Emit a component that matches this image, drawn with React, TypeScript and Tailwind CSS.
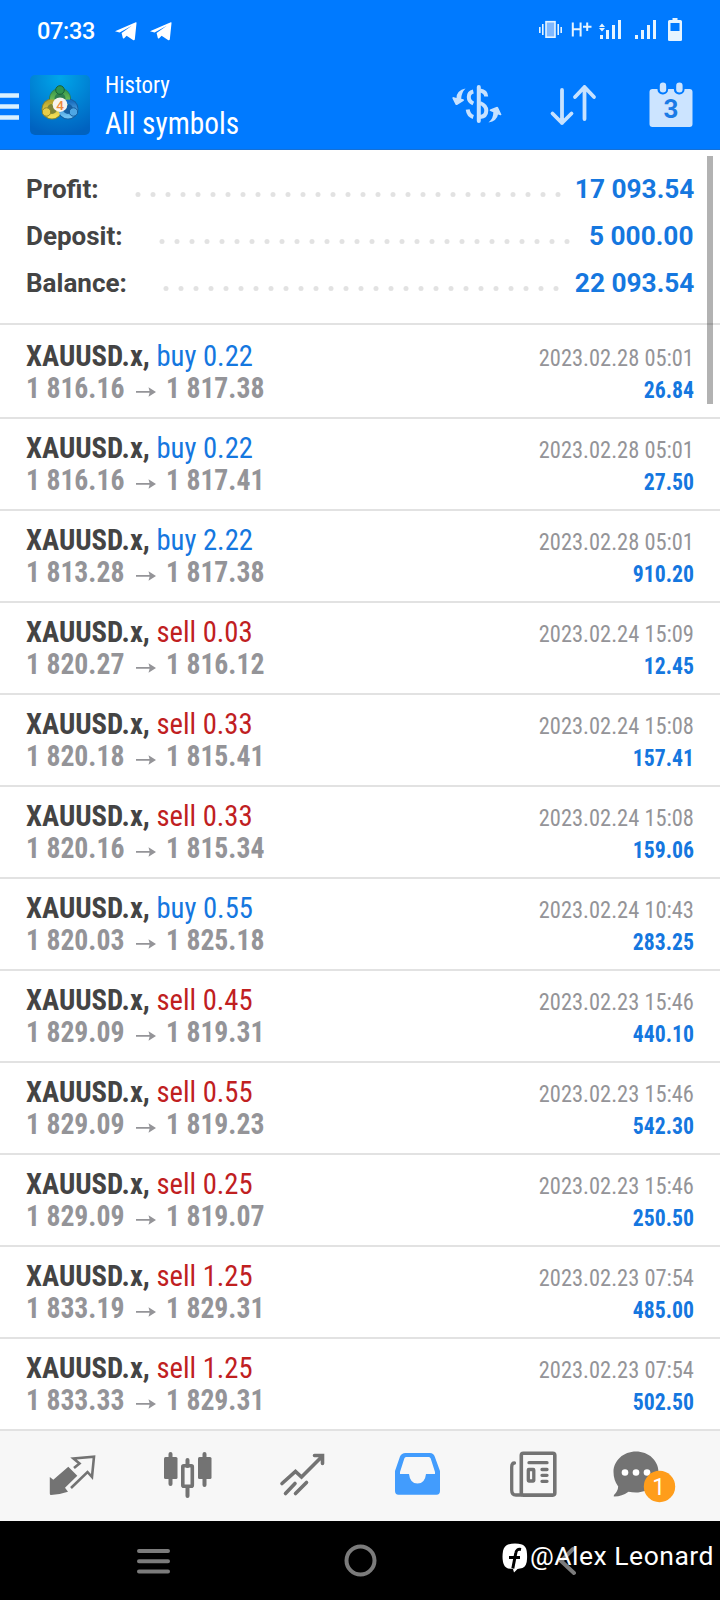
import React from "react";

type Side = "buy" | "sell";
type Deal = [Side, string, string, string, string, string];

const deals: Deal[] = [
  ["buy", "0.22", "1 816.16", "1 817.38", "2023.02.28 05:01", "26.84"],
  ["buy", "0.22", "1 816.16", "1 817.41", "2023.02.28 05:01", "27.50"],
  ["buy", "2.22", "1 813.28", "1 817.38", "2023.02.28 05:01", "910.20"],
  ["sell", "0.03", "1 820.27", "1 816.12", "2023.02.24 15:09", "12.45"],
  ["sell", "0.33", "1 820.18", "1 815.41", "2023.02.24 15:08", "157.41"],
  ["sell", "0.33", "1 820.16", "1 815.34", "2023.02.24 15:08", "159.06"],
  ["buy", "0.55", "1 820.03", "1 825.18", "2023.02.24 10:43", "283.25"],
  ["sell", "0.45", "1 829.09", "1 819.31", "2023.02.23 15:46", "440.10"],
  ["sell", "0.55", "1 829.09", "1 819.23", "2023.02.23 15:46", "542.30"],
  ["sell", "0.25", "1 829.09", "1 819.07", "2023.02.23 15:46", "250.50"],
  ["sell", "1.25", "1 833.19", "1 829.31", "2023.02.23 07:54", "485.00"],
  ["sell", "1.25", "1 833.33", "1 829.31", "2023.02.23 07:54", "502.50"],
];

function Telegram() {
  return (
    <svg width="22" height="19" viewBox="0 0 22 19" fill="#fff">
      <path d="M0 9.2 20.8.2Q21.8 0 21.500 1.200L19.800 17.600Q19.200 18.900 18 18L11.600 13.800 9.200 16.200Q8 17.100 7.700 15.500L6.600 11 16.800 3.800 4.600 10.600Z" />
    </svg>
  );
}

function StatusIcons() {
  return (
    <svg width="148" height="26" viewBox="0 0 148 26" fill="#e6f4ff">
      <rect x="9" y="3.700" width="9" height="15.500" fill="#7fb8ff" stroke="#e6f4ff" strokeWidth="1.600" />
      <path d="M2 9h1.600v6H2zM5 6h1.600v11H5zM20.400 6H22v11h-1.600zM23.400 9H25v6h-1.600z" />
      <path d="M35.800 4.500v14M43.600 4.500v14M35.800 11.300H43.600M46 8.700h8.500M50.200 4.500v8.500" fill="none" stroke="#e6f4ff" strokeWidth="2" />
      <path d="m62 9 3-3.500L68 9zM62 10l3 3.500L68 10zM63 17h3V21h-3zM69 12h3v9h-3zM75 7h3v14h-3zM81 2h3v19h-3z" />
      <path d="M98 17h3v4h-3zM104 12h3v9h-3zM110 7h3v14h-3zM116 2h3v19h-3z" />
      <path fillRule="evenodd" d="M135.500 0h5v2h3q1.500 0 1.500 1.500V22q0 1-1.500 1h-11q-1.500 0-1.500-1V3.500Q131 2 132.500 2h3zM133.500 5v8h9V5z" />
    </svg>
  );
}

function AppLogo() {
  return (
    <svg width="60" height="60" viewBox="0 0 60 60">
      <defs>
        <radialGradient id="bg" cx=".5" cy=".05" r=".95">
          <stop offset="0" stopColor="#00a6ea" />
          <stop offset="1" stopColor="#0062c0" />
        </radialGradient>
        <linearGradient id="gr" x2="0" y2="1"><stop stopColor="#3a9a4c" /><stop offset="1" stopColor="#8ed35c" /></linearGradient>
        <linearGradient id="ye" x2="0" y2="1"><stop stopColor="#b9a52e" /><stop offset="1" stopColor="#f3dd55" /></linearGradient>
        <linearGradient id="bl" x2="0" y2="1"><stop stopColor="#1a6fc0" /><stop offset="1" stopColor="#70c2f2" /></linearGradient>
      </defs>
      <rect width="60" height="60" rx="5" fill="url(#bg)" />
      <circle cx="30" cy="24" r="11" fill="#2d7f50" />
      <circle cx="22" cy="34" r="10.500" fill="#7d8538" />
      <circle cx="38" cy="34" r="10.500" fill="#1560a4" />
      <circle cx="30" cy="23.500" r="7.800" fill="none" stroke="url(#gr)" strokeWidth="4.500" />
      <circle cx="22" cy="34" r="7.300" fill="none" stroke="url(#ye)" strokeWidth="4.500" />
      <circle cx="38" cy="34" r="7.300" fill="none" stroke="url(#bl)" strokeWidth="4.500" />
      <circle cx="30" cy="15" r="4.300" fill="#2f9450" stroke="#17603b" />
      <circle cx="16.500" cy="37" r="4.200" fill="#e7cd49" stroke="#8d872b" />
      <circle cx="43.500" cy="37" r="4.200" fill="#4ea6e4" stroke="#135a9c" />
      <circle cx="30" cy="29.700" r="7.300" fill="#f8f3ee" />
      <text x="30" y="34.500" textAnchor="middle" fontSize="13.500" fontWeight="500" fill="#f08a3c" fontFamily="Roboto, sans-serif">4</text>
    </svg>
  );
}

function CurrencyIcon() {
  return (
    <svg width="50" height="42" viewBox="0 0 50 42" fill="none" stroke="#c7e2ff" strokeWidth="4">
      <path d="M26.800 4v34" strokeLinecap="round" />
      <path d="M28 7.500Q34 8.500 34.200 13.500M21.300 8.500Q16.800 9.500 16.800 14 16.800 18.500 21.300 20.500M15.700 26.500Q16.500 32.500 21.300 34M28 20Q34.300 22.500 34.300 27.500 34.300 33.500 28 34" />
      <path d="M13.500 5.500Q4.500 7.500 4.500 15L1 14Q0 14.500 .5 15.500L3.500 21.500Q4.300 22.500 5.500 21.700L11.800 17.700Q12.300 16.700 11.300 16.300L9.200 15.700Q9.500 9.500 13.500 5.500ZM36.500 39.500Q45 38 46 31.500L48.500 32.300Q49.800 32.500 49.300 31.300L46 24.300Q45.500 23.500 44.300 24L38 26.500Q37 27.300 38.300 28L41.300 29.200Q41.500 35.500 36.500 39.500Z" fill="#c7e2ff" stroke="none" />
    </svg>
  );
}

function SortIcon() {
  return (
    <svg width="48" height="42" viewBox="0 0 48 42" fill="none" stroke="#c7e2ff" strokeWidth="3.800" strokeLinecap="round" strokeLinejoin="round">
      <path d="M13 6v33M3.500 29.500 13 39l9.500-9.500M35.500 35V3M26 13l9.500-10L45 13" />
    </svg>
  );
}

function CalendarIcon() {
  return (
    <svg width="44" height="46" viewBox="0 0 44 46">
      <rect x=".5" y="7" width="43" height="38" rx="3" fill="#cce4ff" />
      <rect x="8.500" y="0" width="10.600" height="12.500" rx="5" fill="#007aff" />
      <rect x="24.900" y="0" width="10.600" height="12.500" rx="5" fill="#007aff" />
      <rect x="10.800" y=".5" width="6.400" height="10" rx="3.200" fill="#cce4ff" />
      <rect x="27.200" y=".5" width="6.400" height="10" rx="3.200" fill="#cce4ff" />
      <text x="22" y="36.300" textAnchor="middle" fontSize="26" fontWeight="700" fill="#1a7be6" fontFamily="Roboto, sans-serif">3</text>
    </svg>
  );
}

function Summary({ label, value, dots, end }: { label: string; value: string; dots: number; end: string }) {
  return (
    <div className="flex h-[47px] items-center justify-between text-[26px] leading-[47px]">
      <span className="font-bold text-[#444]">{label}</span>
      <span className="flex items-center">
        <svg width={dots * 15} height="6" className={"mt-[8px] " + end}>
          {Array.from({ length: dots }, (_, i) => (
            <circle key={i} cx={i * 15 + 12} cy="3.500" r="2.500" fill="#e2e2e2" />
          ))}
        </svg>
        <span className="origin-right scale-x-[1.01] font-bold text-[#1577df]">{value}</span>
      </span>
    </div>
  );
}

function DealRow({ deal }: { deal: Deal }) {
  const [side, volume, open, close, time, profit] = deal;
  return (
    <div className="flex h-[92px] justify-between border-b-2 border-[#e2e2e2] px-[26px] pt-[13px] font-['Roboto_Condensed',Roboto,sans-serif]">
      <div className="whitespace-nowrap">
        <div className="h-8 origin-left scale-x-[.955] text-[30px] leading-8">
          <span className="font-bold text-[#444]">XAUUSD.x, </span>
          <span className={side === "buy" ? "text-[#1577df]" : "text-[#c0201f]"}>{side} {volume}</span>
        </div>
        <div className="flex h-8 items-center text-[29px] font-bold leading-8 text-[#949498]">
          <span className="w-[110px] origin-left scale-x-[.955]">{open}</span>
          <svg width="20" height="12" viewBox="0 0 20 12" className="mt-2 shrink-0" fill="#949498">
            <path d="M0 5h14V6.800H0zM12.500 1.300 20 6l-7.500 4.700 1.300-4.700z" />
          </svg>
          <span className="ml-[10px] origin-left scale-x-[.955]">{close}</span>
        </div>
      </div>
      <div className="whitespace-nowrap pt-[2px] text-right text-2xl leading-8">
        <div className="h-8 origin-right scale-x-[.935] text-[#949498]">{time}</div>
        <div className="h-8 origin-right scale-x-[.905] font-bold text-[#1577df]">{profit}</div>
      </div>
    </div>
  );
}

function TabBar() {
  return (
    <nav className="flex h-[90px] shrink-0 bg-[#f7f7f7]">
      <svg width="720" height="90" viewBox="0 0 720 90" fill="none" stroke="#737373">
        <path d="M49.800 46 53.300 48.800 68.300 35.700 77.300 44.800 65 56.700 68 60.700Q60 63.500 51 64Q49.800 64 49.800 62.500Z" fill="#737373" stroke="none" />
        <path d="M74 37 79.500 32.500 73.500 27.500 94 25.700 92 46 87.500 41 71 57" strokeWidth="2.600" />
        <path d="M170.500 23v30M204.500 23v31M187.500 29v6M187.500 56v9" strokeWidth="4" strokeLinecap="round" />
        <rect x="164" y="26" width="13.500" height="22" rx="1.500" fill="#737373" stroke="none" />
        <rect x="198" y="26" width="13.500" height="22" rx="1.500" fill="#737373" stroke="none" />
        <rect x="182.800" y="34.800" width="9.500" height="20.500" strokeWidth="3.600" rx="1" />
        <path d="M282 52.500 295.500 40.500 301.500 46 321 26.500M314.500 24.500h8v8M285.500 62.500l9.500-10M295.500 62.500l11-11" strokeWidth="3.600" strokeLinecap="round" strokeLinejoin="miter" />
        <path fill="#429cfd" stroke="none" fillRule="evenodd" d="M405.500 22h24.500q3.500 0 4.700 3.500L440 40V60q0 3.700-3.500 3.700h-38Q395 63.700 395 60V40l5-14.500Q401.500 22 405.500 22ZM406 26q-1.200 0-1.700 1.500L400 41v2h9q1 9.500 8.500 9.500T426 43h9v-2l-4.300-13.500Q430 26 429 26Z" />
        <rect x="521.300" y="22.300" width="33.500" height="41.800" rx="2" strokeWidth="3.600" />
        <path d="M514.500 32q-2.800 0-2.800 4V59q0 5 4.200 5h6M529 31.700h18M542 38.500h5M542 44.300h5M542 50.300h5" strokeWidth="3.300" strokeLinecap="round" />
        <rect x="528.300" y="38.500" width="5.500" height="11.500" strokeWidth="3.300" rx=".5" />
        <path d="M636 20.500c12.500 0 22.500 9 22.500 20.500S648.500 61.500 636 61.500q-4 0-7.500-.8Q622 65.500 614.500 65.500q-1.500 0-.5-1.500 4-4 4.200-8.500Q613.500 49 613.500 41C613.500 29.500 623.500 20.500 636 20.500Z" fill="#737373" stroke="none" />
        <g fill="#fff" stroke="none"><circle cx="625" cy="41.500" r="3.300" /><circle cx="636" cy="41.500" r="3.300" /><circle cx="647" cy="41.500" r="3.300" /></g>
        <circle cx="659.500" cy="55.500" r="15.700" fill="#ff9d1b" stroke="none" />
        <text x="658.800" y="63.700" textAnchor="middle" fontSize="23" fill="#fff" stroke="none" fontFamily="Roboto, sans-serif">1</text>
      </svg>
    </nav>
  );
}

export default function App() {
  return (
    <div className="relative flex h-[1600px] w-[720px] flex-col overflow-hidden bg-white font-[Roboto,sans-serif]">
      <header className="h-[150px] shrink-0 border-b border-[#1670d5] bg-[#007aff] text-white">
        <div className="flex h-[62px] items-center justify-between pl-[37px] pr-[35px]">
          <div className="flex items-center">
            <span className="w-[78px] pt-[2px] text-[23.500px] font-medium tracking-[-.3px]">07:33</span>
            <Telegram />
            <span className="w-[13px]" />
            <Telegram />
          </div>
          <StatusIcons />
        </div>
        <div className="flex h-[87px] items-start">
          <svg width="30" height="60" viewBox="0 0 30 60" className="mt-[13px]"><path d="M0 20.500h19M0 31.500h19M0 42.500h19" stroke="#d9f1ff" strokeWidth="4.500" /></svg>
          <div className="mt-[13px]"><AppLogo /></div>
          <div className="ml-[15px] mt-[8px] w-[331px] whitespace-nowrap font-['Roboto_Condensed',Roboto,sans-serif]">
            <div className="h-[34px] origin-left scale-x-[.935] text-[24.500px] leading-[30px]">History</div>
            <div className="origin-left scale-x-[.917] text-[32px] leading-[38px]">All symbols</div>
          </div>
          <div className="mt-[21px] w-[97px] pl-4"><CurrencyIcon /></div>
          <div className="mt-[22px] w-[98px] pl-4"><SortIcon /></div>
          <div className="mt-[20px] pl-[18px]"><CalendarIcon /></div>
        </div>
      </header>
      <section className="mb-[2px] h-[175px] shrink-0 border-b-2 border-[#e2e2e2] px-[26px] pt-[16px]">
        <Summary label="Profit:" value="17 093.54" dots={29} end="mr-[15px]" />
        <Summary label="Deposit:" value="5 000.00" dots={28} end="mr-[20px]" />
        <Summary label="Balance:" value="22 093.54" dots={27} end="mr-[17px]" />
      </section>
      <main className="h-[1104px] shrink-0">
        {deals.map((deal, i) => <DealRow key={i} deal={deal} />)}
      </main>
      <TabBar />
      <footer className="relative h-[79px] shrink-0 bg-black">
        <svg width="720" height="79" fill="none" stroke="#7b7b7b" strokeWidth="4" strokeLinecap="round">
          <path d="M139 30h29M139 40.300h29M139 50.600h29M573 28 561 40l13 12" />
          <circle cx="360.500" cy="39.500" r="14" />
        </svg>
        <div className="absolute right-[6px] top-[16px] flex items-center whitespace-nowrap text-[26.500px] leading-[38px] tracking-[.5px] text-white">
          <svg width="26" height="30" viewBox="0 0 26 30" className="mt-1">
            <path d="M6 1.500Q13-.5 20 1.500 24 3 24.700 8 25.500 14 24.700 19 23.500 25 18 25.500L15.500 26 12 29.500 11 26 6 25.500Q2 24 1 19 0 14 1 8 2 3 6 1.500Z" fill="#fff" />
            <path d="M19 6.500Q14.500 5.500 13.800 10L10.800 25.500M7 14.500h11" stroke="#000" strokeWidth="3" fill="none" />
          </svg>
          <span className="ml-[2px]">@Alex Leonard</span>
        </div>
      </footer>
      <div className="absolute left-[707px] top-[156px] h-[248px] w-[6px] bg-black/30" />
    </div>
  );
}
